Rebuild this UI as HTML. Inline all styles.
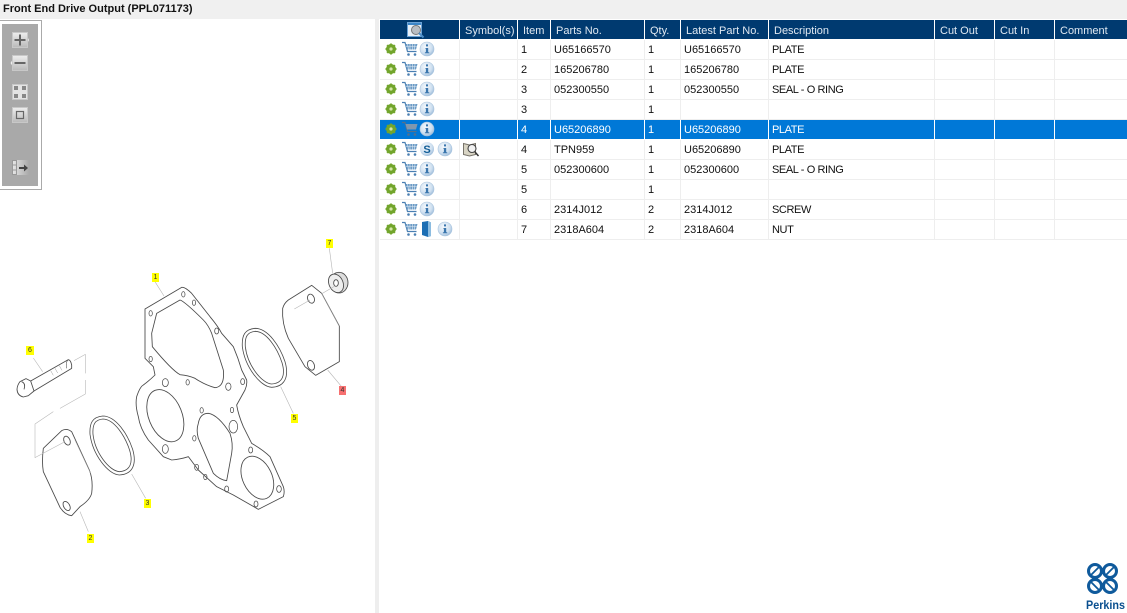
<!DOCTYPE html>
<html><head><meta charset="utf-8"><style>
html,body{margin:0;padding:0;background:#fff}
body{width:1127px;height:613px;position:relative;overflow:hidden;font-family:"Liberation Sans",sans-serif;color:#111}
#title{position:absolute;left:0;top:0;width:1127px;height:19px;background:#f0f0f0;font-weight:bold;font-size:11px;line-height:18px;padding-left:3px;box-sizing:border-box}
#div{position:absolute;left:375px;top:19px;width:4px;height:594px;background:#eee}
#tb{position:absolute;left:0;top:20px;width:42px;height:170px;box-sizing:border-box;border:1px solid #aaa;border-left:0;background:#fff}
#tb i{position:absolute;left:2px;top:3px;width:36px;height:162px;background:#a9a9a9}
table{position:absolute;left:380px;top:20px;width:747px;border-collapse:separate;border-spacing:0;table-layout:fixed;font-size:11px}
td,th{padding:2px 0 0 3px;height:17px;line-height:17px;border-right:1px solid #eee;border-bottom:1px solid #eee;white-space:nowrap;overflow:hidden;text-align:left;font-weight:normal;box-sizing:content-box}
th{background:#003a70;color:#dfe8f1;padding:4px 0 0 5px;height:15px;line-height:15px;border-right:1px solid #fff;border-bottom:1px solid #fff}
td:nth-child(7){letter-spacing:-.4px}
tr.s td{background:#0078d7;color:#fff;border-right-color:#fff;border-bottom-color:#fff}
td:last-child,th:last-child{border-right:0}
#ic,#dr,#tbi{position:absolute;left:0;top:0}
.l{position:absolute;background:#ff0;font-size:7px;line-height:9px;height:9px;width:7px;text-align:center;color:#333}
#logo{position:absolute;left:1083px;top:561px}
</style></head><body>
<div id="title">Front End Drive Output (PPL071173)</div>
<div id="div"></div>
<div id="tb"><i></i></div>
<svg id="tbi" width="45" height="195">
<defs><linearGradient id="b" x1="0" y1="0" x2="0" y2="1"><stop offset="0" stop-color="#eee"/><stop offset="1" stop-color="#b9b9b9"/></linearGradient>
<linearGradient id="f" x1="0" y1="0" x2="1" y2="0"><stop offset="0" stop-color="#e8e8e8"/><stop offset="1" stop-color="#a9a9a9"/></linearGradient></defs>
<path d="M27.5 37l1.500 3-1.500 3z" fill="#eee"/><rect x="12.500" y="32.500" width="15" height="15" fill="url(#b)" stroke="#c8c8c8"/><path d="M14.500 40h11M20 34.500v11" stroke="#666" stroke-width="2"/>
<path d="M12.500 60l-2 3 2 3z" fill="#eee"/><rect x="12.500" y="55.500" width="15" height="15" fill="url(#b)" stroke="#c8c8c8"/><path d="M14.500 63h11" stroke="#666" stroke-width="2"/>
<rect x="12.500" y="84.500" width="15" height="15" fill="#e4e4e4" stroke="#c8c8c8"/><rect x="14" y="86" width="4" height="4" fill="#888"/><rect x="22" y="86" width="4" height="4" fill="#888"/><rect x="14" y="94" width="4" height="4" fill="#888"/><rect x="22" y="94" width="4" height="4" fill="#888"/>
<rect x="12.500" y="107.500" width="15" height="15" fill="url(#b)" stroke="#c8c8c8"/><rect x="16.500" y="111.500" width="7" height="7" fill="none" stroke="#666" stroke-width="1.200"/>
<rect x="12" y="160" width="17" height="15" fill="url(#f)"/><rect x="12.500" y="160.500" width="4" height="14" fill="none" stroke="#999"/><path d="M12 165h4.500M12 170h4.500" stroke="#999"/><path d="M19 168h6" stroke="#444" stroke-width="2"/><path d="M24 164.500l4 3.500-4 3.500z" fill="#444"/>
</svg>

<table>
<colgroup><col style="width:80px"><col style="width:58px"><col style="width:33px"><col style="width:94px"><col style="width:36px"><col style="width:88px"><col style="width:166px"><col style="width:60px"><col style="width:60px"><col style="width:72px"></colgroup>
<tr><th></th><th>Symbol(s)</th><th>Item</th><th>Parts No.</th><th>Qty.</th><th>Latest Part No.</th><th>Description</th><th>Cut Out</th><th>Cut In</th><th>Comment</th></tr>
<tr><td></td><td></td><td>1</td><td>U65166570</td><td>1</td><td>U65166570</td><td>PLATE</td><td></td><td></td><td></td></tr>
<tr><td></td><td></td><td>2</td><td>165206780</td><td>1</td><td>165206780</td><td>PLATE</td><td></td><td></td><td></td></tr>
<tr><td></td><td></td><td>3</td><td>052300550</td><td>1</td><td>052300550</td><td>SEAL - O RING</td><td></td><td></td><td></td></tr>
<tr><td></td><td></td><td>3</td><td></td><td>1</td><td></td><td></td><td></td><td></td><td></td></tr>
<tr class="s"><td></td><td></td><td>4</td><td>U65206890</td><td>1</td><td>U65206890</td><td>PLATE</td><td></td><td></td><td></td></tr>
<tr><td></td><td></td><td>4</td><td>TPN959</td><td>1</td><td>U65206890</td><td>PLATE</td><td></td><td></td><td></td></tr>
<tr><td></td><td></td><td>5</td><td>052300600</td><td>1</td><td>052300600</td><td>SEAL - O RING</td><td></td><td></td><td></td></tr>
<tr><td></td><td></td><td>5</td><td></td><td>1</td><td></td><td></td><td></td><td></td><td></td></tr>
<tr><td></td><td></td><td>6</td><td>2314J012</td><td>2</td><td>2314J012</td><td>SCREW</td><td></td><td></td><td></td></tr>
<tr><td></td><td></td><td>7</td><td>2318A604</td><td>2</td><td>2318A604</td><td>NUT</td><td></td><td></td><td></td></tr>
</table>

<svg id="ic" width="1127" height="250" style="pointer-events:none">
<defs>
<radialGradient id="inf" cx=".4" cy=".35" r=".75"><stop offset="0" stop-color="#f4f8fc"/><stop offset=".6" stop-color="#cfe0f0"/><stop offset="1" stop-color="#8fb2d4"/></radialGradient>
<g id="gear"><circle r="3.500" fill="none" stroke="#72a52c" stroke-width="3"/><path d="M0-5.500V5.500M-5.500 0H5.500M-3.900-3.900L3.900 3.900M-3.900 3.900L3.900-3.900" stroke="#72a52c" stroke-width="1.800"/><circle r="1.600" fill="#d6e6a8"/></g>
<g id="cart"><path d="M-8-6.500h3l2.500 9h9" fill="none" stroke="#4a7fb2" stroke-width="1.200"/><path d="M-4.500-5h12l-1.500 5.500h-9z" fill="#6d9cc6"/><path d="M-2.500-5l1 5.500M0-5v5.500M2.500-5v5.500M5-5l-.5 5.500M-4-2.500h11" stroke="#dfeaf4" stroke-width=".6"/><circle cx="-1.500" cy="5.500" r="1.300" fill="#4a7fb2"/><circle cx="5" cy="5.500" r="1.300" fill="#4a7fb2"/></g>
<g id="cartg"><path d="M-8-6.500h3l2.500 9h9" fill="none" stroke="#55708c" stroke-width="1.200"/><path d="M-4.500-5h12l-1.500 5.500h-9z" fill="#7f97ae"/><circle cx="-1.500" cy="5.500" r="1.300" fill="#55708c"/><circle cx="5" cy="5.500" r="1.300" fill="#55708c"/></g>
<g id="info"><circle r="7" fill="url(#inf)" stroke="#a9c4de" stroke-width=".6"/><rect x="-1" y="-4.600" width="2" height="2" fill="#3b76ad"/><path d="M-1.500-1h2.700v4.200h1v1h-4.300v-1h1V0h-.4z" fill="#3b76ad"/></g>
<g id="row"><use href="#gear" x="11"/><use href="#cart" x="30"/></g>
</defs>
<g transform="translate(380,49)"><use href="#row"/><use href="#info" x="47"/></g>
<g transform="translate(380,69)"><use href="#row"/><use href="#info" x="47"/></g>
<g transform="translate(380,89)"><use href="#row"/><use href="#info" x="47"/></g>
<g transform="translate(380,109)"><use href="#row"/><use href="#info" x="47"/></g>
<g transform="translate(380,129)"><use href="#gear" x="11"/><use href="#cartg" x="30"/><use href="#info" x="47"/></g>
<g transform="translate(380,149)"><use href="#row"/><circle cx="47" r="7" fill="url(#inf)"/><text x="47" y="3.800" text-anchor="middle" font-size="11" font-weight="bold" fill="#0f5c96" font-family="Liberation Sans,sans-serif">S</text><use href="#info" x="65"/></g>
<g transform="translate(380,169)"><use href="#row"/><use href="#info" x="47"/></g>
<g transform="translate(380,189)"><use href="#row"/><use href="#info" x="47"/></g>
<g transform="translate(380,209)"><use href="#row"/><use href="#info" x="47"/></g>
<g transform="translate(380,229)"><use href="#row"/><path d="M42-7l6-1 3 1.500V7l-3 1-6-2z" fill="#1c6eb4"/><path d="M48-8l3 1.500V7l-3 1z" fill="#8cbce0"/><use href="#info" x="65"/></g>
<!-- header icon -->
<rect x="407.500" y="22.500" width="14" height="14" fill="#e8f0f8" stroke="#6ca3d6"/><rect x="408" y="23" width="13" height="2" fill="#3c86c8"/><circle cx="416" cy="30" r="4.500" fill="#b9bec4" stroke="#777"/><path d="M419 33l4.500 4.500" stroke="#4d8ec8" stroke-width="2"/>
<!-- symbol icon -->
<path d="M463.500 143.500l6 1.500 6-1.500v11l-6 1.500-6-1.500z" fill="#d8d4c4" stroke="#77736a"/><circle cx="472" cy="148.500" r="4" fill="#f2f2f2" stroke="#444" stroke-width="1.100"/><path d="M475 152l3.500 4" stroke="#333" stroke-width="1.500"/>
</svg>

<svg id="dr" width="375" height="613" fill="none" stroke="#4a4a4a" stroke-width=".9" stroke-linejoin="round">
<defs><g id="ring"><path d="M337 350C335 315 345 298 375 295C415 295 450 350 465 395C478 440 465 470 425 472C390 470 345 410 337 350Z"/><path d="M346 350C344 320 352 306 376 304C410 305 442 355 456 398C467 435 458 460 425 462C395 460 352 405 346 350Z"/></g></defs>
<g transform="translate(130,230) scale(.33333)" stroke-width="2.600">
<path d="M45 237L155 172Q165 170 185 190L240 260Q265 290 275 310L310 350Q325 385 335 420L350 450Q352 465 345 480L320 525Q325 555 340 590L365 640Q400 660 420 680L460 770Q465 785 460 800L385 838L310 795L260 770L205 720L175 680Q150 688 125 690L100 680L55 630Q30 595 25 560Q15 525 20 500Q30 470 40 465Q60 450 75 435L70 410L45 385Z"/>
<path d="M80 250L150 210Q165 215 220 270Q235 285 245 310L280 420Q285 470 255 473Q225 465 195 445Q175 436 150 434Q125 420 67 350L65 310Z"/>
<ellipse cx="106" cy="557" rx="50" ry="82" transform="rotate(-22 106 557)"/>
<path d="M205 580Q210 550 235 550Q265 555 300 610Q310 640 305 670L290 752Q270 750 250 730L205 625Q198 600 205 580Z"/>
<ellipse cx="382" cy="743" rx="44" ry="68" transform="rotate(-25 382 743)"/>
<use href="#ring" stroke-width="2.400"/>
<g stroke-width="2.200">
<ellipse cx="62" cy="250" rx="5" ry="8"/><ellipse cx="160" cy="193" rx="5" ry="8"/><ellipse cx="192" cy="218" rx="5" ry="8"/><ellipse cx="260" cy="303" rx="6" ry="9"/><ellipse cx="62" cy="387" rx="5" ry="8"/><ellipse cx="106" cy="458" rx="9" ry="12"/><ellipse cx="173" cy="457" rx="5" ry="8"/><ellipse cx="295" cy="470" rx="8" ry="11"/><ellipse cx="338" cy="455" rx="6" ry="9"/><ellipse cx="215" cy="541" rx="5" ry="8"/><ellipse cx="306" cy="540" rx="5" ry="8"/><ellipse cx="310" cy="590" rx="13" ry="19"/><ellipse cx="193" cy="625" rx="5" ry="8"/><ellipse cx="106" cy="657" rx="9" ry="13"/><ellipse cx="200" cy="712" rx="6" ry="9"/><ellipse cx="226" cy="741" rx="5" ry="8"/><ellipse cx="362" cy="660" rx="6" ry="9"/><ellipse cx="290" cy="777" rx="6" ry="9"/><ellipse cx="447" cy="777" rx="7" ry="10"/><ellipse cx="378" cy="822" rx="6" ry="9"/>
</g>
<path d="M458 235Q455 280 475 325L525 410L557 436L628 395V288L575 190L545 166L475 210Q462 220 458 235Z"/>
<path d="M575 190L628 288" stroke="#999" stroke-width="1.600"/>
<ellipse cx="543" cy="206" rx="10" ry="14" transform="rotate(-20 543 206)"/><ellipse cx="543" cy="406" rx="10" ry="15" transform="rotate(-20 543 406)"/>
<ellipse cx="627" cy="158" rx="27" ry="31" fill="#ddd"/>
<ellipse cx="618" cy="160" rx="21" ry="29" transform="rotate(-25 618 160)" fill="#eee"/><ellipse cx="618" cy="159" rx="7" ry="10" fill="#fff"/>
<g stroke="#b5b5b5" stroke-width="1.800"><path d="M75 155L102 198M598 55L608 130M493 237L540 210M577 190L615 168M593 420L635 470M452 470L490 550"/></g>
</g>
<g transform="translate(0,330) scale(.33333)" stroke-width="2.600">
<path d="M60 155L78 146L92 153L102 183L85 197L70 201Q52 197 51 178Q52 165 60 155Z"/>
<path d="M65 155Q78 160 72 178M92 153L205 89Q212 90 215 105L215 115L102 183"/>
<path d="M205 89Q196 95 200 115" stroke-width="1.800"/>
<path d="M152 122l8 14M165 115l8 14M178 107l8 14" stroke="#999" stroke-width="1.500"/>
<path d="M130 355L185 302Q200 293 215 305L268 420Q280 450 275 490Q270 510 240 530L215 557Q195 555 180 532L130 425Q125 395 130 355Z"/>
<path d="M225 330L272 430" stroke="#999" stroke-width="1.600"/>
<ellipse cx="201" cy="332" rx="9" ry="14" transform="rotate(-25 201 332)"/><ellipse cx="200" cy="528" rx="9" ry="15" transform="rotate(-30 200 528)"/>
<use href="#ring" x="-67" y="-37" stroke-width="2.400"/>
<g stroke="#b8b8b8" stroke-width="1.800"><path d="M100 84L128 125M222 92L256 73V130M256 150V192L180 235M160 245L105 282V383L195 335M395 432L437 505M240 545L265 605"/></g>
</g>
</svg>

<div class="l" style="left:152px;top:273px">1</div>
<div class="l" style="left:326px;top:239px">7</div>
<div class="l" style="left:26px;top:346px;width:8px">6</div>
<div class="l" style="left:339px;top:386px;background:#f77070">4</div>
<div class="l" style="left:291px;top:414px">5</div>
<div class="l" style="left:144px;top:499px">3</div>
<div class="l" style="left:87px;top:534px">2</div>

<svg id="logo" width="44" height="52" fill="none" stroke="#0f5a9c" stroke-width="3">
<circle cx="12" cy="10" r="6.500"/><circle cx="27" cy="10" r="6.500"/><circle cx="12" cy="25" r="6.500"/><circle cx="27" cy="25" r="6.500"/>
<path d="M8 14L16 6M23 14L31 6M8 21L16 29M23 21L31 29" stroke-width="1.800"/>
<text x="3" y="48" font-size="12" font-weight="bold" fill="#0a4f8f" stroke="none" font-family="Liberation Sans,sans-serif" textLength="39" lengthAdjust="spacingAndGlyphs">Perkins</text>
</svg>
</body></html>
